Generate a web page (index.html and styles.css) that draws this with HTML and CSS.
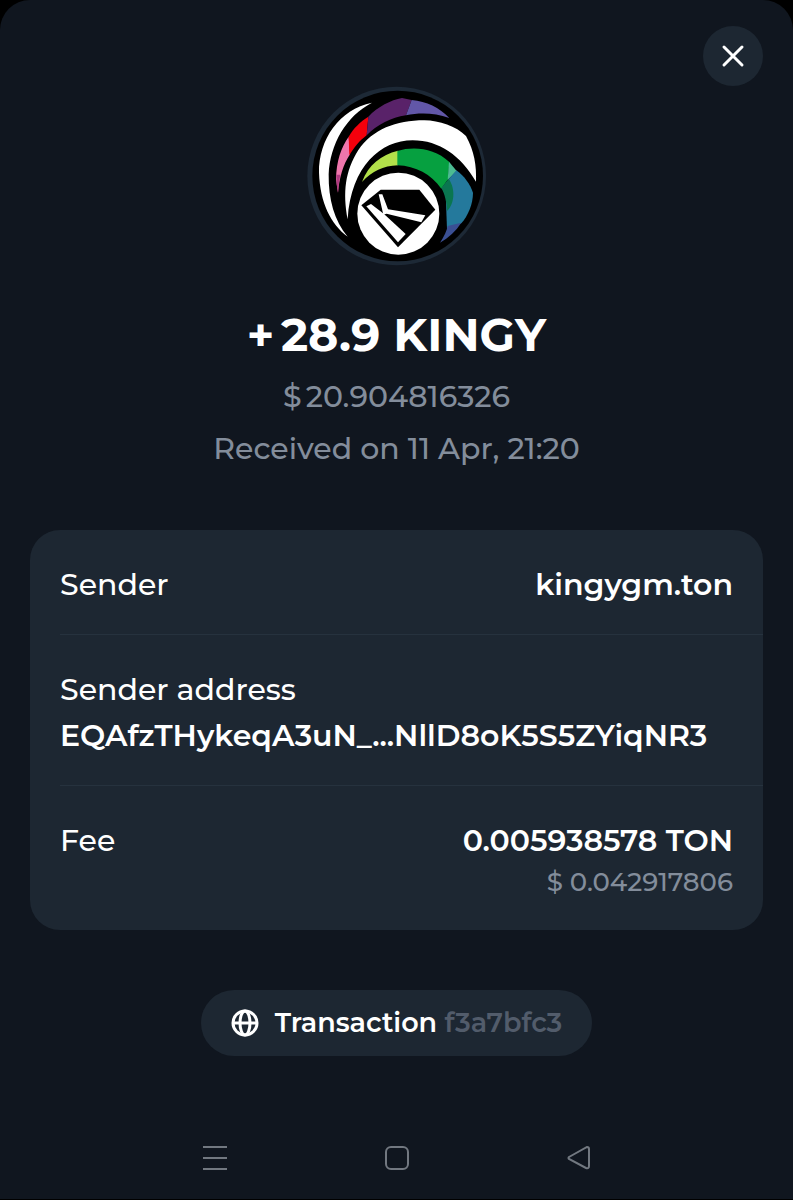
FILE: index.html
```html
<!DOCTYPE html>
<html lang="en">
<head>
  <meta charset="UTF-8">
  <meta name="viewport" content="width=device-width, initial-scale=1.0">
  <title>Transaction details</title>
  <link rel="stylesheet" href="styles.css">
</head>
<body>
  <main class="sheet">
    <header class="sheet-header">
      <button class="close" type="button" aria-label="Close">
        <svg width="24" height="24" viewBox="0 0 24 24"><path d="M3 3L21 21M21 3L3 21"/></svg>
      </button>
    </header>

    <section class="summary">
      <svg class="token-logo" viewBox="33 30 540 540" aria-hidden="true">
        <circle cx="302" cy="300" r="268" fill="#1d2936"/>
        <circle cx="305" cy="300" r="256" fill="#000"/>
        <!-- left crescent -->
        <path fill="#fff" d="M228 80C130 100 68 190 69 290C72 380 105 445 155 482C115 435 97 370 98 295C102 205 150 120 228 80Z"/>
        <!-- purple and red band -->
        <path fill="#ef76ac" d="M120 310C121 255 135 215 158 182L162 235C142 265 130 305 126 350Z"/>
        <path fill="#b03a80" d="M121 296H133Q128 320 126 350Q120 325 121 296Z"/>
        <path fill="#f4000c" d="M158 182C174 155 192 138 217 122L212 178C190 195 175 213 160 238Z"/>
        <path fill="#592269" d="M217 122C245 92 285 72 318 66L347 72L330 118C285 125 245 145 212 178Z"/>
        <path fill="#6257a8" d="M347 72C392 76 430 95 460 126C415 110 370 110 330 118Z"/>
        <!-- white band -->
        <path fill="#fff" d="M155 430C140 350 147 285 187 222C230 160 300 133 385 133C430 134 480 150 510 180C535 225 542 270 540 317C495 240 430 193 350 193C255 193 165 270 155 430Z"/>
        <!-- green and blue band -->
        <path fill="#b2e04a" d="M198 318C218 265 255 237 306 224V268C260 270 230 285 198 318Z"/>
        <path fill="#06a040" d="M304 225C355 210 415 217 460 258L456 310L436 338C405 295 360 270 304 268Z"/>
        <path fill="#4cbc92" d="M459 257L482 285L455 312Z"/>
        <path fill="#24799c" d="M481 283C505 300 522 325 531 350C531 385 515 420 496 442L453 460L450 380L456 312Z"/>
        <path fill="#0a7650" d="M458 308C480 340 475 385 453 405C452 380 447 355 436 336Z"/>
        <path fill="#3a4f93" d="M496 440C480 465 458 485 432 500C445 480 452 465 455 450Z"/>
        <!-- diamond -->
        <circle cx="307" cy="413" r="123" fill="#fff"/>
        <path fill="#000" d="M254 341H370L418 401L306 514L196 388Z"/>
        <path fill="#fff" d="M211 391L225 384L264 414L329 474L306 499Z"/>
        <path fill="#fff" d="M248 355L259 355L276 400L388 418L376 439L272 413L262 416Z"/>
      </svg>
      <h1 class="amount">+&thinsp;28.9 KINGY</h1>
      <p class="muted">$&thinsp;20.904816326</p>
      <p class="muted">Received on 11 Apr, 21:20</p>
    </section>

    <dl class="card">
      <div class="row">
        <dt>Sender</dt>
        <dd>kingygm.ton</dd>
      </div>
      <div class="row stacked">
        <dt>Sender address</dt>
        <dd class="address">EQAfzTHykeqA3uN_...NllD8oK5S5ZYiqNR3</dd>
      </div>
      <div class="row">
        <dt>Fee</dt>
        <dd>0.005938578 TON <span class="fiat">$ 0.042917806</span></dd>
      </div>
    </dl>

    <a class="transaction" href="#">
      <svg width="28" height="28" viewBox="0 0 28 28"><circle cx="14" cy="14" r="12"/><ellipse cx="14" cy="14" rx="5" ry="12"/><path d="M2 14H26"/></svg>
      <span>Transaction <span class="hash">f3a7bfc3</span></span>
    </a>

    <nav class="system-nav">
      <button type="button" aria-label="Recent apps">
        <svg width="24" height="24" viewBox="0 0 24 24"><path d="M0 1H24M0 12H24M0 23H24"/></svg>
      </button>
      <button type="button" aria-label="Home">
        <svg width="24" height="24" viewBox="0 0 24 24"><rect x="1" y="1" width="22" height="22" rx="5"/></svg>
      </button>
      <button type="button" aria-label="Back">
        <svg width="24" height="24" viewBox="0 0 24 24"><path d="M2 11L20 1Q22 1 22 3V20Q22 23 19 22L2 13Q1 12 2 11Z"/></svg>
      </button>
    </nav>
  </main>
</body>
</html>
```
FILE: styles.css
```css
* {
  box-sizing: border-box;
}

body {
  margin: 0;
  background-color: #000;
  color: #fff;
  font-family: Montserrat, Inter, sans-serif;
  font-size: 30px;
  font-weight: 500;
}

h1, p, dl, dd {
  margin: 0;
}

button {
  padding: 0;
  border: none;
  background: none;
  cursor: pointer;
}

svg {
  display: block;
  fill: none;
}

.sheet {
  display: flex;
  flex-direction: column;
  min-height: calc(100vh - 1px);
  padding: 26px 30px 0;
  border-radius: 30px 30px 0 0;
  background-color: #10161f;
}

.sheet-header {
  display: flex;
  justify-content: flex-end;
}

.close {
  display: flex;
  align-items: center;
  justify-content: center;
  width: 60px;
  height: 60px;
  border-radius: 50%;
  background-color: #1d2732;
}

.close svg {
  stroke: #fff;
  stroke-width: 3;
  stroke-linecap: round;
}

.summary {
  display: flex;
  flex-direction: column;
  align-items: center;
  gap: 12px;
  text-align: center;
}

.token-logo {
  width: 180px;
  height: 180px;
}

.amount {
  margin-top: 27px;
  font-size: 46px;
  font-weight: 700;
  line-height: 60px;
}

.muted {
  color: #838d9b;
  line-height: 40px;
}

.card {
  margin-top: 61px;
  border-radius: 30px;
  background-color: #1d2732;
}

.row {
  display: flex;
  justify-content: space-between;
  margin-left: 30px;
  padding: 32px 30px 26px 0;
  border-bottom: 1px solid #26323e;
  line-height: 46px;
}

.row:last-child {
  padding-bottom: 30px;
  border-bottom: none;
}

.row dd {
  font-weight: 600;
  text-align: right;
}

.row.stacked {
  flex-direction: column;
}

.row .address {
  text-align: left;
}

.fiat {
  display: block;
  color: #838d9b;
  font-size: 26px;
  font-weight: 500;
  line-height: 36px;
}

.transaction {
  display: flex;
  align-items: center;
  align-self: center;
  gap: 16px;
  margin-top: 60px;
  padding: 0 30px;
  border-radius: 33px;
  background-color: #1d2732;
  color: #fff;
  font-size: 27px;
  font-weight: 600;
  line-height: 66px;
  text-decoration: none;
}

.transaction svg {
  stroke: #fff;
  stroke-width: 3;
}

.hash {
  color: #525c6b;
}

.system-nav {
  display: flex;
  justify-content: center;
  gap: 158px;
  margin-top: auto;
  padding-bottom: 29px;
}

.system-nav svg {
  stroke: #727880;
  stroke-width: 2;
}
```
